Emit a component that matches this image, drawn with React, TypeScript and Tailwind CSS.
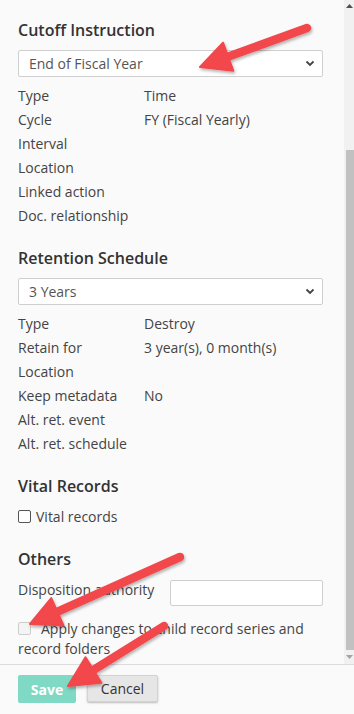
import React from "react";

const Chevron = () => (
  <svg width="10" height="7" viewBox="0 0 10 7" className="shrink-0">
    <path d="M1.5 1.5 L5 5 L8.5 1.5" fill="none" stroke="#444" strokeWidth="1.8" />
  </svg>
);

const Select = ({ value }: { value: string }) => (
  <div className="flex h-[27px] items-center justify-between rounded-[2px] border border-[#cfcfcf] bg-white pl-[10px] pr-[7px] text-[14px] text-[#555]">
    <span>{value}</span>
    <Chevron />
  </div>
);

const Row = ({ label, value }: { label: string; value?: string }) => (
  <div className="flex h-6 items-center text-[14px] text-[#444]">
    <div className="w-[126px] shrink-0">{label}</div>
    <div>{value}</div>
  </div>
);

const Heading = ({ children }: { children: React.ReactNode }) => (
  <h2 className="h-[22px] text-[16px] leading-[22px] font-semibold text-[#333]">{children}</h2>
);

// arrow overlay: shaft + triangle head, tail -> tip
const Arrow = ({ x1, y1, x2, y2 }: { x1: number; y1: number; x2: number; y2: number }) => {
  const dx = x2 - x1;
  const dy = y2 - y1;
  const len = Math.sqrt(dx * dx + dy * dy);
  const ux = dx / len;
  const uy = dy / len;
  const hl = 30;
  const hw = 15;
  const bx = x2 - ux * hl;
  const by = y2 - uy * hl;
  const pts = `${x2},${y2} ${bx - uy * hw},${by + ux * hw} ${bx + uy * hw},${by - ux * hw}`;
  return (
    <g>
      <line x1={x1} y1={y1} x2={bx + ux * 4} y2={by + uy * 4} stroke="#f2464b" strokeWidth="8.5" strokeLinecap="round" />
      <polygon points={pts} fill="#f2464b" stroke="#f2464b" strokeWidth="2" strokeLinejoin="round" />
    </g>
  );
};

export default function App() {
  return (
    <div className="relative h-[714px] w-[354px] overflow-hidden bg-[#fafafa]" style={{ fontFamily: '"Open Sans", "Liberation Sans", sans-serif' }}>
      <div className="flex h-[665px] border-b border-[#dcdcdc]">
        <div className="flex-1 pl-[18px] pr-[21px] pt-[19px]">
          <Heading>Cutoff Instruction</Heading>
          <div className="mt-[9px]">
            <Select value="End of Fiscal Year" />
          </div>
          <div className="mt-[6px]">
            <Row label="Type" value="Time" />
            <Row label="Cycle" value="FY (Fiscal Yearly)" />
            <Row label="Interval" />
            <Row label="Location" />
            <Row label="Linked action" />
            <Row label="Doc. relationship" />
          </div>

          <div className="mt-5">
            <Heading>Retention Schedule</Heading>
          </div>
          <div className="mt-[9px]">
            <Select value="3 Years" />
          </div>
          <div className="mt-[6px]">
            <Row label="Type" value="Destroy" />
            <Row label="Retain for" value="3 year(s), 0 month(s)" />
            <Row label="Location" />
            <Row label="Keep metadata" value="No" />
            <Row label="Alt. ret. event" />
            <Row label="Alt. ret. schedule" />
          </div>

          <div className="mt-5">
            <Heading>Vital Records</Heading>
          </div>
          <div className="mt-[7px] flex h-6 items-center gap-[5px] text-[14px] text-[#444]">
            <span className="h-[13px] w-[13px] rounded-[2px] border border-[#555] bg-white" />
            <span>Vital records</span>
          </div>

          <div className="mt-5">
            <Heading>Others</Heading>
          </div>
          <div className="mt-[10px] flex items-start text-[14px] text-[#444]">
            <div className="w-[152px] shrink-0 -mt-[1px]">Disposition authority</div>
            <div className="h-[26px] flex-1 rounded-[2px] border border-[#cfcfcf] bg-white" />
          </div>
          <div className="mt-[13px] text-[14px] leading-5 text-[#444]">
            <span className="mr-[10px] inline-block h-[13px] w-[13px] rounded-[2px] border border-[#cdcdcd] bg-[#f4f4f4] align-[-1px]" />
            Apply changes to child record series and record folders
          </div>
        </div>

        <div className="flex w-[10px] flex-col bg-[#f1f1f1]">
          <div className="flex h-[12px] items-center justify-center">
            <svg width="7" height="4" viewBox="0 0 7 4">
              <path d="M0 4 L3.5 0 L7 4 Z" fill="#505050" />
            </svg>
          </div>
          <div className="mt-[138px] ml-[2px] h-[500px] bg-[#c1c1c1]" />
          <div className="flex flex-1 items-center justify-center">
            <svg width="7" height="4" viewBox="0 0 7 4">
              <path d="M0 0 L3.5 4 L7 0 Z" fill="#a3a3a3" />
            </svg>
          </div>
        </div>
      </div>

      <div className="flex gap-[11px] pl-[18px] pt-[10px]">
        <button className="h-[28px] w-[58px] rounded-[2px] bg-[#7fd9c4] text-[14px] font-bold text-white">Save</button>
        <button className="h-[27px] w-[71px] rounded-[2px] border border-[#d3d3d3] bg-[#e6e6e6] text-[14px] text-[#333] shadow-[0_1px_2px_rgba(0,0,0,0.25)]">
          Cancel
        </button>
      </div>

      <svg className="pointer-events-none absolute inset-0" width="354" height="714" viewBox="0 0 354 714">
        <defs>
          <filter id="sh" x="-20%" y="-20%" width="140%" height="140%">
            <feDropShadow dx="1" dy="2" stdDeviation="1.5" floodColor="#000" floodOpacity="0.3" />
          </filter>
        </defs>
        <g filter="url(#sh)">
          <Arrow x1={307} y1={28} x2={200} y2={67} />
          <Arrow x1={180} y1={557} x2={30} y2={624} />
          <Arrow x1={164} y1={626} x2={68} y2={686} />
        </g>
      </svg>
    </div>
  );
}
